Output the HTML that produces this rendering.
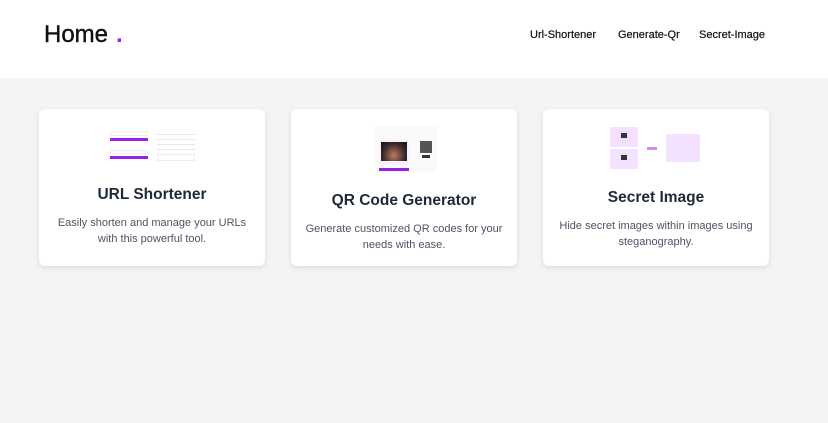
<!DOCTYPE html>
<html><head><meta charset="utf-8"><style>
*{margin:0;padding:0;box-sizing:border-box}
body{width:828px;height:423px;background:#f3f4f6;font-family:"Liberation Sans",Arial,sans-serif;position:relative;overflow:hidden}
header{position:absolute;left:0;top:0;width:828px;height:78px;background:#fff}
.logo{position:absolute;left:44px;top:21px;font-size:24px;font-weight:500;color:#111;-webkit-text-stroke:0.4px #111}
.logo span{color:#9b1fe8;margin-left:8px;font-weight:700;-webkit-text-stroke:0}
nav a{position:absolute;top:29px;font-size:11px;color:#111;text-decoration:none;font-weight:500;-webkit-text-stroke:0.2px #111}
.card{position:absolute;top:109px;width:226px;height:157px;background:#fff;border-radius:6px;box-shadow:0 2px 6px rgba(0,0,0,.1)}
.t{position:absolute;left:0;width:100%;text-align:center;font-size:15.5px;font-weight:700;color:#1f2937}
.d{position:absolute;left:12px;right:12px;text-align:center;font-size:11px;line-height:16px;color:#4b5563}
.abs{position:absolute}
</style></head><body>
<header>
<div class="logo">Home<span>.</span></div>
<nav><a style="left:530px">Url-Shortener</a><a style="left:618px">Generate-Qr</a><a style="left:699px">Secret-Image</a></nav>
</header>

<div class="card" style="left:39px">
 <div class="abs" style="left:71px;top:16px;width:87px;height:40px;background:#fff">
  <div class="abs" style="left:0;top:6px;width:38px;height:5px;border:1px solid #eee"></div>
  <div class="abs" style="left:0;top:13px;width:38px;height:3px;background:#9b1fe8"></div>
  <div class="abs" style="left:0;top:25px;width:38px;height:4px;border:1px solid #eee"></div>
  <div class="abs" style="left:0;top:31px;width:38px;height:3px;background:#9b1fe8"></div>
  <div class="abs" style="left:47px;top:7px;width:38px;height:20px;background:repeating-linear-gradient(#fff 0,#fff 2px,#e5e7eb 2px,#e5e7eb 3px,#fff 3px,#fff 5px)"></div>
  <div class="abs" style="left:47px;top:29px;width:38px;height:7px;border:1px solid #eee"></div>
 </div>
 <div class="t" style="top:77px">URL Shortener</div>
 <div class="d" style="top:106px">Easily shorten and manage your URLs<br>with this powerful tool.</div>
</div>

<div class="card" style="left:291px">
 <div class="abs" style="left:84px;top:17px;width:62px;height:46px;background:#fafafa">
  <div class="abs" style="left:4px;top:14px;width:30px;height:25px;background:#fbf0ff"></div>
  <div class="abs" style="left:6px;top:16px;width:26px;height:19px;background:radial-gradient(ellipse at 50% 70%,#c47a5a,#3a2a30 60%,#111)"></div>
  <div class="abs" style="left:4px;top:42px;width:30px;height:3px;background:#9b1fe8"></div>
  <div class="abs" style="left:45px;top:15px;width:12px;height:12px;background:#555"></div>
  <div class="abs" style="left:47px;top:29px;width:8px;height:3px;background:#333"></div>
 </div>
 <div class="t" style="top:83px">QR Code Generator</div>
 <div class="d" style="top:112px">Generate customized QR codes for your<br>needs with ease.</div>
</div>

<div class="card" style="left:543px">
 <div class="abs" style="left:67px;top:18px;width:28px;height:20px;background:#f3e1ff"></div>
 <div class="abs" style="left:78px;top:24px;width:6px;height:5px;background:#333"></div>
 <div class="abs" style="left:67px;top:40px;width:28px;height:20px;background:#f3e1ff"></div>
 <div class="abs" style="left:78px;top:46px;width:6px;height:5px;background:#333"></div>
 <div class="abs" style="left:104px;top:38px;width:10px;height:3px;background:#d68af5"></div>
 <div class="abs" style="left:123px;top:25px;width:34px;height:28px;background:#f3e1ff"></div>
 <div class="t" style="top:80px">Secret Image</div>
 <div class="d" style="top:109px">Hide secret images within images using<br>steganography.</div>
</div>
</body></html>
